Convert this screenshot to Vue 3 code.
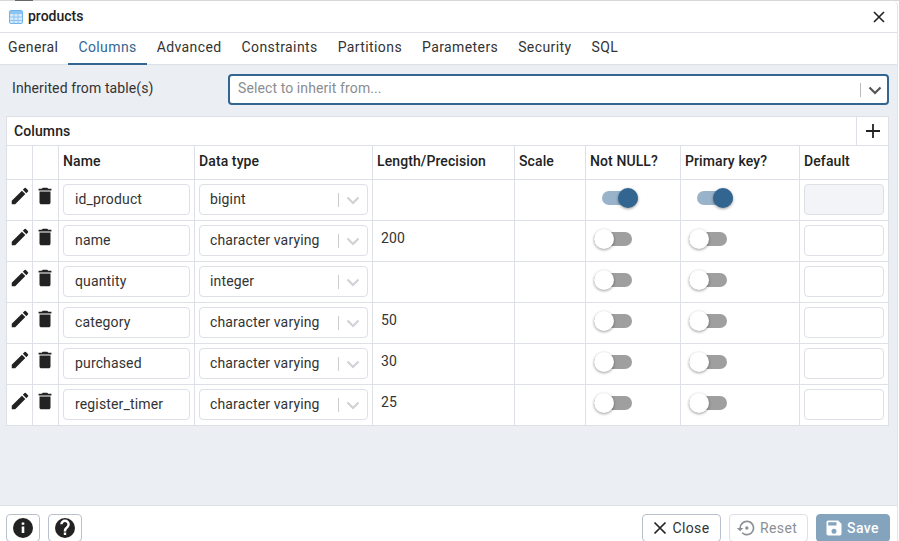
<template>
  <div class="page">
    <div class="backdrop-strip"><span class="strip-dark"></span></div>
    <div class="dialog">
      <div class="title-bar">
        <svg class="table-icon" width="14" height="14" viewBox="0 0 14 14">
          <rect x="0.5" y="0.5" width="13" height="13" rx="1.5" fill="#d6e9fa" stroke="#6db3ee" />
          <rect x="1" y="1" width="12" height="3" fill="#8cc4f2" />
          <path d="M1 7h12M1 10.500h12M5 4v9M9 4v9" stroke="#8cc4f2" stroke-width="1" fill="none" />
        </svg>
        <span class="title">products</span>
        <svg class="close-x" width="14" height="14" viewBox="0 0 14 14">
          <path d="M2 2l10 10M12 2L2 12" stroke="#222" stroke-width="1.600" fill="none" />
        </svg>
      </div>

      <div class="tabs">
        <div v-for="tab in tabs" :key="tab" class="tab" :class="{ active: tab === 'Columns' }">{{ tab }}</div>
      </div>

      <div class="body">
        <div class="inherit-row">
          <label>Inherited from table(s)</label>
          <div class="inherit-select">
            <span class="placeholder">Select to inherit from...</span>
            <span class="sep"></span>
            <svg class="chev" width="20" height="20" viewBox="0 0 20 20">
              <path d="M4.500 7.500L10 13l5.500-5.500" stroke="#555" stroke-width="2.200" fill="none" />
            </svg>
          </div>
        </div>

        <div class="grid-box">
          <div class="grid-head">
            <span>Columns</span>
            <button class="add-btn">
              <svg width="16" height="16" viewBox="0 0 16 16">
                <path d="M8 1v14M1 8h14" stroke="#222" stroke-width="1.800" fill="none" />
              </svg>
            </button>
          </div>
          <table>
            <colgroup>
              <col v-for="w in colWidths" :key="w.id" :style="{ width: w.px + 'px' }" />
            </colgroup>
            <thead>
              <tr>
                <th></th>
                <th></th>
                <th>Name</th>
                <th>Data type</th>
                <th>Length/Precision</th>
                <th>Scale</th>
                <th>Not NULL?</th>
                <th>Primary key?</th>
                <th>Default</th>
              </tr>
            </thead>
            <tbody>
              <tr v-for="row in rows" :key="row.name">
                <td class="icon-cell">
                  <svg width="22" height="22" viewBox="0 0 24 24">
                    <path fill="#222" d="M3 17.250V21h3.750L17.810 9.940l-3.750-3.750L3 17.250zM20.710 7.040a1 1 0 0 0 0-1.410l-2.340-2.340a1 1 0 0 0-1.410 0l-1.830 1.830 3.750 3.750 1.830-1.830z" />
                  </svg>
                </td>
                <td class="icon-cell trash">
                  <svg width="22" height="22" viewBox="0 0 24 24">
                    <path fill="#222" d="M6 19c0 1.100.9 2 2 2h8c1.100 0 2-.9 2-2V7H6v12zM19 4h-3.500l-1-1h-5l-1 1H5v2h14V4z" />
                  </svg>
                </td>
                <td class="pad">
                  <div class="input name">{{ row.name }}</div>
                </td>
                <td class="pad">
                  <div class="input type">
                    <span class="type-text">{{ row.type }}</span>
                    <span class="sep light"></span>
                    <svg width="20" height="20" viewBox="0 0 20 20">
                      <path d="M4.500 7.500L10 13l5.500-5.500" stroke="#cfd2d6" stroke-width="2.200" fill="none" />
                    </svg>
                  </div>
                </td>
                <td class="plain">{{ row.length }}</td>
                <td></td>
                <td>
                  <span class="switch" :class="{ on: row.primary }"><i></i></span>
                </td>
                <td>
                  <span class="switch" :class="{ on: row.primary }"><i></i></span>
                </td>
                <td class="pad">
                  <div class="input default" :class="{ disabled: row.primary }"></div>
                </td>
              </tr>
            </tbody>
          </table>
        </div>
      </div>

      <div class="footer">
        <button class="btn square">
          <svg width="24" height="24" viewBox="0 0 24 24">
            <path fill="#222" d="M12 2a10 10 0 1 0 0 20 10 10 0 0 0 0-20zm1.300 15h-2.600v-6.500h2.600V17zm0-8.200h-2.600V6.500h2.600v2.300z" />
          </svg>
        </button>
        <button class="btn square">
          <svg width="24" height="24" viewBox="0 0 24 24">
            <path fill="#222" d="M12 2a10 10 0 1 0 0 20 10 10 0 0 0 0-20zm1.200 17h-2.400v-2.400h2.400V19zm2.500-7.700l-1.100 1.100c-.9.900-1.400 1.600-1.400 3h-2.400v-.6c0-1.300.5-2.500 1.400-3.400l1.500-1.500c.4-.4.700-1 .7-1.600 0-1.300-1.100-2.400-2.400-2.400S9.600 7 9.600 8.300H7.200a4.800 4.800 0 0 1 9.600 0c0 1.100-.4 2.100-1.100 3z" />
          </svg>
        </button>
        <span class="spacer"></span>
        <button class="btn close-btn">
          <svg width="14" height="14" viewBox="0 0 14 14">
            <path d="M1.500 1.500l11 11M12.500 1.500l-11 11" stroke="#222" stroke-width="1.700" fill="none" />
          </svg>
          Close
        </button>
        <button class="btn reset-btn">
          <svg width="20" height="20" viewBox="0 0 24 24">
            <path fill="#8c8f94" d="M13 3a9 9 0 0 0-9 9H1l3.900 3.900L8.900 12H6a7 7 0 1 1 2.100 5l-1.400 1.400A9 9 0 1 0 13 3zm0 7a2 2 0 1 0 0 4 2 2 0 0 0 0-4z" />
          </svg>
          Reset
        </button>
        <button class="btn save-btn">
          <svg width="20" height="20" viewBox="0 0 24 24">
            <path fill="#fff" d="M17 3H5a2 2 0 0 0-2 2v14a2 2 0 0 0 2 2h14a2 2 0 0 0 2-2V7l-4-4zm-5 16a3 3 0 1 1 0-6 3 3 0 0 1 0 6zm3-10H5V5h10v4z" />
          </svg>
          Save
        </button>
      </div>
    </div>
  </div>
</template>

<script setup>
const tabs = ['General', 'Columns', 'Advanced', 'Constraints', 'Partitions', 'Parameters', 'Security', 'SQL']

const colWidths = [25, 26, 136, 178, 142, 71, 95, 119, 89].map((px, id) => ({ id, px }))

const rows = [
  { name: 'id_product', type: 'bigint', length: '', primary: true },
  { name: 'name', type: 'character varying', length: '200', primary: false },
  { name: 'quantity', type: 'integer', length: '', primary: false },
  { name: 'category', type: 'character varying', length: '50', primary: false },
  { name: 'purchased', type: 'character varying', length: '30', primary: false },
  { name: 'register_timer', type: 'character varying', length: '25', primary: false }
]
</script>

<style scoped>
.page {
  width: 899px;
  height: 541px;
  overflow: hidden;
  background: #fff;
  font-family: Roboto, "Liberation Sans", sans-serif;
  font-size: 14px;
  letter-spacing: 0.15px;
  color: #222;
}

.backdrop-strip {
  height: 1px;
  background: #d8d8d8;
  padding-left: 15px;
}

.strip-dark {
  display: block;
  width: 18px;
  height: 1px;
  background: #666;
}

.dialog {
  width: 898px;
  height: 540px;
  box-sizing: border-box;
  padding-top: 1px;
  display: flex;
  flex-direction: column;
  background: #fff;
  border-right: 1px solid #e4e4e4;
  border-top-right-radius: 5px;
}

.title-bar {
  height: 30px;
  flex: none;
  display: flex;
  align-items: center;
  gap: 5px;
  padding: 0 11px 0 9px;
  border-bottom: 1px solid #dde0e6;
}

.title {
  font-weight: 500;
  flex: 1;
  margin-top: -2px;
  letter-spacing: 0;
}

.tabs {
  height: 31px;
  flex: none;
  display: flex;
  border-bottom: 1px solid #dde0e6;
}

.tab {
  padding: 0 10px;
  line-height: 28px;
  letter-spacing: 0.4px;
  color: #333;
}

.tab:first-child {
  padding-left: 8px;
}

.tab.active {
  color: #326690;
  border-bottom: 2px solid #326690;
  height: 30px;
  margin-bottom: -1px;
}

.body {
  flex: 1;
  background: #ebeef3;
  padding: 9px 0 0 6px;
  min-height: 0;
}

.inherit-row {
  display: flex;
  align-items: center;
  height: 31px;
  padding-right: 8px;
}

.inherit-row label {
  width: 222px;
  padding-left: 6px;
  margin-top: -3px;
  box-sizing: border-box;
  letter-spacing: 0.1px;
  color: #333;
}

.inherit-select {
  flex: 1;
  height: 31px;
  box-sizing: border-box;
  background: #fff;
  border: 2px solid #326690;
  border-radius: 4px;
  display: flex;
  align-items: center;
  padding: 0 2px 0 8px;
}

.placeholder {
  flex: 1;
  margin-top: -3px;
  letter-spacing: 0.1px;
  color: #8a8d91;
}

.sep {
  width: 1px;
  height: 14px;
  background: #bbb;
  margin-right: 4px;
}

.sep.light {
  background: #ccc;
}

.grid-box {
  margin-top: 11px;
  width: 883px;
  background: #fff;
  border: 1px solid #dde0e6;
  box-sizing: border-box;
}

.grid-head {
  height: 29px;
  box-sizing: border-box;
  display: flex;
  align-items: center;
  justify-content: space-between;
  padding-left: 7px;
  font-weight: 500;
  letter-spacing: 0.1px;
  border-bottom: 1px solid #dde0e6;
}

.add-btn {
  width: 32px;
  height: 28px;
  padding: 0;
  border: 0;
  border-left: 1px solid #dde0e6;
  background: #fff;
  display: flex;
  align-items: center;
  justify-content: center;
}

table {
  border-collapse: separate;
  border-spacing: 0;
  table-layout: fixed;
  width: 881px;
}

th,
td {
  box-sizing: border-box;
  border-left: 1px solid #dde0e6;
  border-bottom: 1px solid #dde0e6;
  padding: 0;
}

th:first-child,
td:first-child {
  border-left: 0;
}

tr:last-child td {
  border-bottom: 0;
}

th {
  height: 34px;
  text-align: left;
  font-weight: 500;
  letter-spacing: 0.1px;
  padding: 0 3px 3px 4px;
  white-space: nowrap;
}

td {
  height: 41px;
}

tr:last-child td {
  height: 40px;
}

.icon-cell {
  text-align: center;
  vertical-align: top;
}

.icon-cell svg {
  display: block;
  margin: 5px auto 0;
}

.icon-cell.trash svg {
  margin-left: 1px;
}

.pad {
  padding: 0 4px 1px;
}

.plain {
  padding: 0 8px 7px;
  vertical-align: middle;
  color: #333;
}

.input {
  height: 31px;
  box-sizing: border-box;
  border: 1px solid #dde0e6;
  border-radius: 4px;
  background: #fff;
  display: flex;
  align-items: center;
}

.input.name {
  padding: 0 0 2px 11px;
  color: #333;
}

.input.type {
  padding: 0 4px 0 10px;
  color: #333;
}

.type-text {
  flex: 1;
  margin-top: -2px;
}

.input.disabled {
  background: #f3f4f7;
}

.switch {
  position: relative;
  display: block;
  width: 38px;
  height: 14px;
  margin: -4px 0 0 8px;
  border-radius: 7px;
  background: #9f9f9f;
}

.switch i {
  position: absolute;
  left: 0;
  top: -3px;
  width: 20px;
  height: 20px;
  border-radius: 50%;
  background: #fff;
  box-shadow: 0 1px 3px rgba(0, 0, 0, 0.4);
}

.switch.on {
  width: 36px;
  margin-left: 16px;
  background: #99b3ca;
}

.switch.on i {
  left: 16px;
  background: #326690;
}

.footer {
  height: 36px;
  flex: none;
  box-sizing: border-box;
  border-top: 1px solid #dde0e6;
  padding: 8px 7px 0 6px;
  display: flex;
  gap: 8px;
  background: #fff;
}

.spacer {
  flex: 1;
}

.btn {
  height: 28px;
  box-sizing: border-box;
  display: flex;
  align-items: center;
  justify-content: center;
  gap: 5px;
  border: 1px solid #b9c1cd;
  border-radius: 4px;
  background: #fff;
  padding: 0;
  font: inherit;
  letter-spacing: 0.4px;
  color: #333;
}

.square {
  width: 34px;
}

.close-btn {
  width: 79px;
}

.reset-btn {
  width: 79px;
  justify-content: flex-start;
  padding-left: 6px;
  gap: 4px;
  color: #8c8f94;
  border-color: #dde0e6;
}

.save-btn {
  width: 74px;
  justify-content: flex-start;
  padding-left: 7px;
  gap: 3px;
  color: #fff;
  font-weight: 500;
  background: #84a3bc;
  border-color: #84a3bc;
}
</style>

<style>
html,
body {
  margin: 0;
  overflow: hidden;
}
</style>
